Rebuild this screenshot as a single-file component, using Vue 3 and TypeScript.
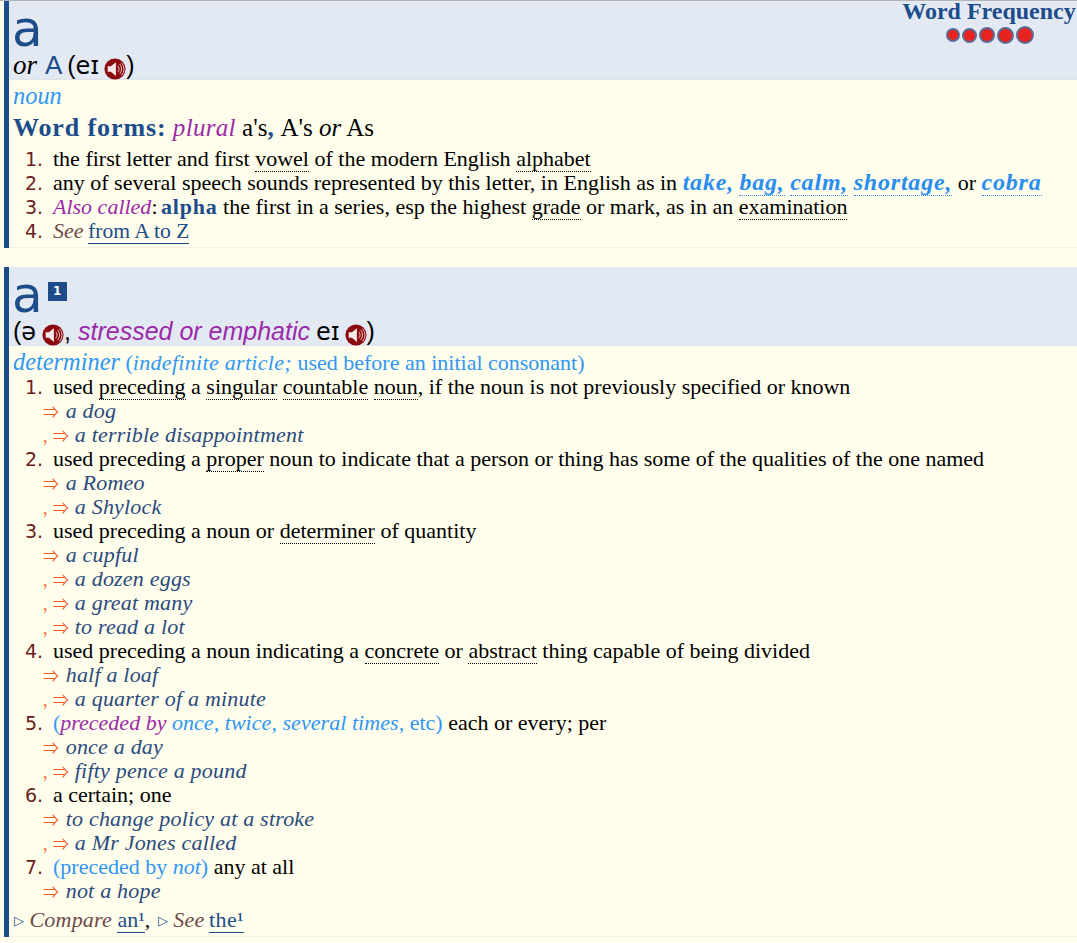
<script setup lang="ts">
const dots = [14, 15, 16, 17, 18]
</script>

<template>
  <div class="page">
    <section class="entry">
      <header class="head first">
        <div class="word-row">
          <span class="hw">a</span>
        </div>
        <div class="pron"><i class="serif">or</i> <span class="alt">A</span> (<span class="ipa">eɪ</span> <svg class="snd" viewBox="0 0 24 24"><circle cx="12" cy="12" r="11.5" fill="#8b0a0f"/><path d="M4 9h3.500L13 4.500v15L7.500 15H4z" fill="#f4e8e8"/><path d="M15 8.500a5 5 0 0 1 0 7M17 6.500a8 8 0 0 1 0 11M19 5a10 10 0 0 1 0 14" fill="none" stroke="#eec9c9" stroke-width="1"/></svg>)</div>
        <div class="freq">
          <div class="freq-title">Word Frequency</div>
          <div class="dots"><span v-for="d in dots" :key="d" class="dot" :style="{ width: d + 'px', height: d + 'px' }"></span></div>
        </div>
      </header>
      <div class="body">
        <div class="pos"><i class="pos-name">noun</i></div>
        <div class="forms"><b class="forms-label">Word forms:</b> <i class="purple wide">plural</i> a's<b class="navy comma">,</b> A's <i>or</i> As</div>
        <ol class="defs">
          <li><span class="n">1.</span><span>the first letter and first <u class="d">vowel</u> of the modern English <u class="d">alphabet</u></span></li>
          <li><span class="n">2.</span><span>any of several speech sounds represented by this letter, in English as in <b class="ex">take,</b> <b class="ex"><u class="db">bag,</u></b> <b class="ex"><u class="db">calm,</u></b> <b class="ex"><u class="db">shortage,</u></b> or <b class="ex"><u class="db">cobra</u></b></span></li>
          <li><span class="n">3.</span><span><i class="purple">Also called</i>: <b class="navy alpha">alpha</b> the first in a series, esp the highest <u class="d">grade</u> or mark, as in an <u class="d">examination</u></span></li>
          <li><span class="n">4.</span><span><i class="brown">See</i> <a class="xref narrow">from A to Z</a></span></li>
        </ol>
      </div>
    </section>
    <section class="entry second">
      <header class="head">
        <div class="word-row">
          <span class="hw">a</span><span class="hom">1</span>
        </div>
        <div class="pron">(<span class="ipa">ə</span> <svg class="snd" viewBox="0 0 24 24"><circle cx="12" cy="12" r="11.5" fill="#8b0a0f"/><path d="M4 9h3.500L13 4.500v15L7.500 15H4z" fill="#f4e8e8"/><path d="M15 8.500a5 5 0 0 1 0 7M17 6.500a8 8 0 0 1 0 11M19 5a10 10 0 0 1 0 14" fill="none" stroke="#eec9c9" stroke-width="1"/></svg>, <i class="stress">stressed or emphatic</i> <span class="ipa">eɪ</span> <svg class="snd" viewBox="0 0 24 24"><circle cx="12" cy="12" r="11.5" fill="#8b0a0f"/><path d="M4 9h3.500L13 4.500v15L7.500 15H4z" fill="#f4e8e8"/><path d="M15 8.500a5 5 0 0 1 0 7M17 6.500a8 8 0 0 1 0 11M19 5a10 10 0 0 1 0 14" fill="none" stroke="#eec9c9" stroke-width="1"/></svg>)</div>
      </header>
      <div class="body">
        <div class="pos"><i class="pos-name">determiner</i> (<i class="wide">indefinite article;</i> used before an initial consonant)</div>
        <ol class="defs flush">
          <li><span class="n">1.</span><span>used <u class="d">preceding</u> a <u class="d">singular</u> <u class="d">countable</u> <u class="d">noun</u>, if the noun is not previously specified or known</span></li>
          <li class="ex1"><span class="ar">⇒</span> a dog</li>
          <li class="ex2"><span class="ar"><span class="cm">,</span> ⇒</span> a terrible disappointment</li>
          <li><span class="n">2.</span><span>used preceding a <u class="d">proper</u> noun to indicate that a person or thing has some of the qualities of the one named</span></li>
          <li class="ex1"><span class="ar">⇒</span> a Romeo</li>
          <li class="ex2"><span class="ar"><span class="cm">,</span> ⇒</span> a Shylock</li>
          <li><span class="n">3.</span><span>used preceding a noun or <u class="d">determiner</u> of quantity</span></li>
          <li class="ex1"><span class="ar">⇒</span> a cupful</li>
          <li class="ex2"><span class="ar"><span class="cm">,</span> ⇒</span> a dozen eggs</li>
          <li class="ex2"><span class="ar"><span class="cm">,</span> ⇒</span> a great many</li>
          <li class="ex2"><span class="ar"><span class="cm">,</span> ⇒</span> to read a lot</li>
          <li><span class="n">4.</span><span>used preceding a noun indicating a <u class="d">concrete</u> or <u class="d">abstract</u> thing capable of being divided</span></li>
          <li class="ex1"><span class="ar">⇒</span> half a loaf</li>
          <li class="ex2"><span class="ar"><span class="cm">,</span> ⇒</span> a quarter of a minute</li>
          <li><span class="n">5.</span><span><span class="blue">(<i class="purple">preceded by</i> <i class="slight">once, twice, several times,</i> etc)</span> each or every; per</span></li>
          <li class="ex1"><span class="ar">⇒</span> once a day</li>
          <li class="ex2"><span class="ar"><span class="cm">,</span> ⇒</span> fifty pence a pound</li>
          <li><span class="n">6.</span><span>a certain; one</span></li>
          <li class="ex1"><span class="ar">⇒</span> to change policy at a stroke</li>
          <li class="ex2"><span class="ar"><span class="cm">,</span> ⇒</span> a Mr Jones called</li>
          <li><span class="n">7.</span><span><span class="blue">(preceded by <i>not</i>)</span> any at all</span></li>
          <li class="ex1"><span class="ar">⇒</span> not a hope</li>
        </ol>
        <div class="compare"><span class="tri">▷</span> <i class="brown spaced">Compare</i> <a class="xref">an¹</a>, <span class="tri tri2">▷</span> <i class="brown spaced">See</i> <a class="xref the">the¹</a></div>
      </div>
    </section>
  </div>
</template>

<style>
html, body { margin: 0; background: #fffeec; }
</style>

<style scoped>
.page {
  font-family: "Liberation Serif", serif;
  font-size: 22px;
  line-height: 24px;
  color: #000;
  background: #fffeec;
  border-top: 1px solid #b4b4b8;
  height: 942px;
  padding-left: 4px;
}
.entry { border-left: 5px solid #1d4c8a; }
.second { margin-top: 19px; }
.head {
  position: relative;
  background: #e3e9f3;
  height: 79px;
  border-bottom: 1px solid #dfe3e8;
  box-sizing: border-box;
  padding-left: 5px;
}
.word-row { height: 50px; display: flex; align-items: flex-start; }
.hw {
  font-family: "DejaVu Sans", sans-serif;
  font-size: 50px;
  line-height: 57px;
  margin-left: -2px;
  color: #1d4c8a;
}
.hom {
  margin: 15px 0 0 5px;
  width: 19px;
  height: 19px;
  background: #1d4c8a;
  color: #fff;
  font-family: "DejaVu Sans", sans-serif;
  font-weight: 700;
  font-size: 12px;
  line-height: 19px;
  text-align: center;
}
.pron { font-size: 25px; line-height: 28px; height: 28px; margin-left: -1px; white-space: nowrap; font-family: "Liberation Sans", sans-serif; }
.serif { font-family: "Liberation Serif", serif; font-size: 27px; }
.alt { color: #1d4c8a; margin-left: 1px; margin-right: -2px; font-size: 26px; }
.ipa { font-family: "DejaVu Sans", sans-serif; font-size: 24px; }
.stress { color: #9a2aa8; margin-right: -1px; }
.snd { width: 22px; height: 22px; vertical-align: -6px; margin-left: -1px; }
.alt ~ .snd { margin-left: -2px; }
.stress + .ipa + .snd { margin-left: -2px; }
.freq { position: absolute; top: -1px; right: 1px; width: 174px; text-align: center; }
.freq-title { font-weight: 700; font-size: 24px; line-height: 22px; color: #1d4c8a; white-space: nowrap; }
.dots { display: flex; justify-content: center; align-items: center; gap: 2px; margin-top: 4px; padding-left: 2px; }
.dot { box-sizing: border-box; border-radius: 50%; background: #e8231f; border: 2px solid #5a6b96; }
.body { padding: 0 0 4px 4px; border-bottom: 1px solid #f3f2e2; }
.pos { color: #3096f5; height: 24px; margin-top: 5px; }
.pos-name { font-size: 24.4px; line-height: 22px; }
.forms { font-size: 25px; line-height: 28px; height: 28px; margin-top: 5px; white-space: nowrap; }
.forms-label { color: #1d4c8a; font-size: 26px; letter-spacing: 0.9px; }
.comma { margin-right: 2px; }
.purple { color: #9a2aa8; }
.wide { letter-spacing: 0.3px; }
.slight { letter-spacing: 0.05px; }
.navy { color: #1d4c8a; }
.alpha { letter-spacing: 0.8px; margin-left: -2px; }
.brown { color: #6e4a4a; }
.spaced { letter-spacing: 0.2px; }
.blue { color: #3096f5; }
.defs { list-style: none; margin: 0; padding: 5px 0 0 0; }
.defs.flush { padding-top: 0; }
.defs li { display: flex; white-space: pre-wrap; height: 24px; }
.n { font-family: "DejaVu Sans", sans-serif; font-size: 19px; color: #6b2020; width: 28px; padding-left: 12px; flex: none; }
.d { text-decoration: none; border-bottom: 1px dotted #000; }
.db { text-decoration: none; border-bottom: 1px dotted #3096f5; }
.ex { color: #2a8df0; font-style: italic; font-size: 24px; line-height: 20px; letter-spacing: 0.8px; }
.xref { color: #1d4c8a; border-bottom: 1px solid #1d4c8a; }
.narrow { font-size: 21.6px; margin-left: -1px; }
.the { margin-left: -1px; letter-spacing: 0.4px; }
.defs .ex1, .defs .ex2 { font-style: italic; color: #2b4a7d; display: block; letter-spacing: 0.2px; padding-left: 30px; }
.ar { color: #f25c2a; font-style: normal; font-size: 16px; font-family: "Noto Sans CJK SC", sans-serif; font-weight: 400; letter-spacing: 0; }
.ex1 .ar { margin-right: 1px; }
.cm { font-family: "Liberation Serif", serif; font-size: 18px; margin-right: 2px; }
.compare { margin-top: 5px; height: 24px; padding-left: 1px; }
.tri { font-size: 13px; color: #1d4c8a; vertical-align: 2px; }
.tri2 { margin-left: 2px; }
</style>
